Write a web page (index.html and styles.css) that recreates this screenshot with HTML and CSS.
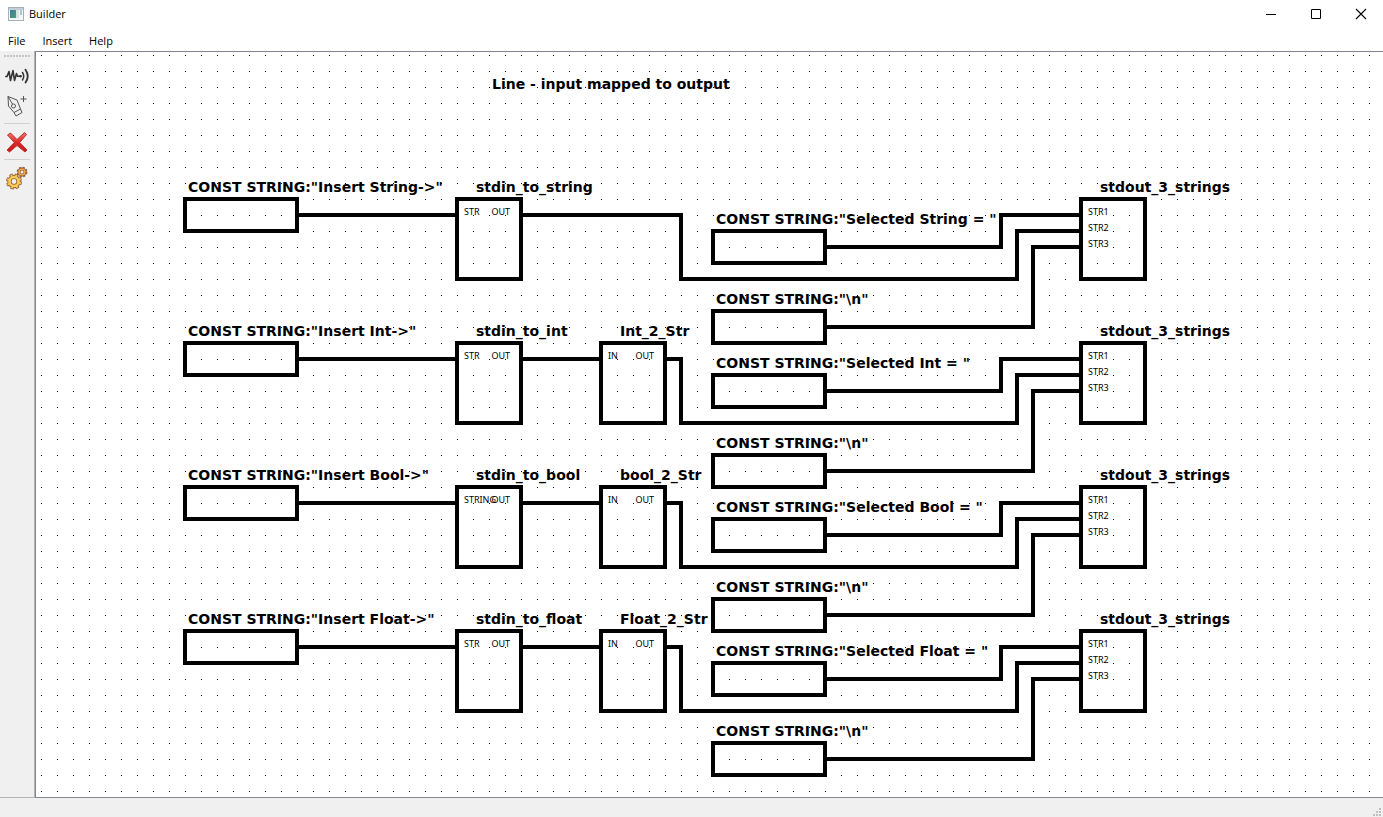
FILE: index.html
```html
<!DOCTYPE html>
<html lang="en">
<head>
<meta charset="utf-8">
<title>Builder</title>
<link rel="stylesheet" href="styles.css">
</head>
<body>
<header class="titlebar">
  <svg class="app-icon" width="16" height="14" viewBox="0 0 16 14" aria-hidden="true">
    <defs><linearGradient id="screen" x1="0" y1="0" x2="1" y2="1"><stop offset="0" stop-color="#3f78a8"/><stop offset="1" stop-color="#4aa36c"/></linearGradient></defs>
    <rect x=".5" y=".5" width="15" height="13" fill="#f4f6f8" stroke="#a3afba"/>
    <rect x="1" y="1" width="14" height="2" fill="#c3ced9"/>
    <rect x="2" y="3" width="6" height="8" fill="url(#screen)"/>
    <rect x="8" y="3" width="3" height="8" fill="#d5e6e2"/>
    <rect x="12" y="3" width="2" height="5" fill="#a9c9c9"/>
  </svg>
  <span class="title">Builder</span>
  <button class="win-btn" aria-label="Minimize"><svg width="12" height="12" viewBox="0 0 12 12"><path d="M1 6.500h10" stroke="#000"/></svg></button>
  <button class="win-btn" aria-label="Maximize"><svg width="12" height="12" viewBox="0 0 12 12"><path d="M1.500 1.500h9v9h-9z" fill="none" stroke="#000"/></svg></button>
  <button class="win-btn" aria-label="Close"><svg width="12" height="12" viewBox="0 0 12 12"><path d="M1 1l10 10M11 1L1 11" stroke="#000" stroke-width="1.100"/></svg></button>
</header>
<nav class="menubar">
  <button>File</button><button>Insert</button><button>Help</button>
</nav>
<div class="workspace">
  <aside class="toolbar">
    <div class="grip"></div>
    <button aria-label="Signal"><svg width="24" height="24" viewBox="0 0 24 24" fill="none" stroke="#333" stroke-linecap="round" stroke-linejoin="round"><path d="M.8 12.500H2L4 7.500L5.500 16.500L8 6.500L9.500 16.500L11.500 9.500L12.500 12.300H16" stroke-width="1.600"/><circle cx="15.500" cy="12.300" r="1.200" fill="#333" stroke="none"/><path d="M17.500 8.500Q20 12.300 17.500 16" stroke-width="1.500"/><path d="M20.500 5.800Q25 12.300 20.500 18.500" stroke-width="1.800"/></svg></button>
    <button aria-label="Pen"><svg width="24" height="24" viewBox="0 0 24 24" fill="none" stroke="#555"><path d="M3 2.500L3.500 12L9 18.500L15.500 15L12 6zM3 2.500L7.500 10M9 18.500L11 22L17 18.500L15.500 15"/><circle cx="8.500" cy="12" r="2"/><path d="M18.500 2v6M15.500 5h6"/></svg></button>
    <hr>
    <button aria-label="Delete"><svg width="24" height="24" viewBox="0 0 24 24"><defs><linearGradient id="red" x1="0" y1="0" x2="0" y2="1"><stop offset="0" stop-color="#f07570"/><stop offset=".5" stop-color="#dd2927"/><stop offset="1" stop-color="#c31818"/></linearGradient></defs><path d="M2.500 5L5.500 3L12 9.500L19.500 2.500L21.500 4.500L14.700 12.500L22 20L20 22L12 15.500L4.500 22L2 20L9.300 12.500z" fill="url(#red)" stroke="#bd3030" stroke-linejoin="round"/></svg></button>
    <hr>
    <button aria-label="Settings"><svg width="24" height="24" viewBox="0 0 24 24" fill="none"><circle cx="9" cy="15.500" r="6.200" stroke="#94653c" stroke-width="3.600" stroke-dasharray="3 1.870"/><circle cx="9" cy="15.500" r="4.600" stroke="#94653c" stroke-width="4.400"/><circle cx="9" cy="15.500" r="5.900" stroke="#ffc94f" stroke-width="2.600" stroke-dasharray="1.600 3.034" stroke-dashoffset="-.7"/><circle cx="9" cy="15.500" r="4.500" stroke="#ffcb55" stroke-width="2.600"/><circle cx="17" cy="6" r="4.200" stroke="#8d5b3c" stroke-width="2.400" stroke-dasharray="2 1.300"/><circle cx="17" cy="6" r="3" stroke="#95603c" stroke-width="3"/><circle cx="17" cy="6" r="2.900" stroke="#f3ac43" stroke-width="1.400"/></svg></button>
  </aside>
  <main class="canvas">
    <svg class="grid" aria-hidden="true"><defs><pattern id="dots" width="16" height="16" patternUnits="userSpaceOnUse"><rect x="5" y="3" width="1" height="1" fill="#000"/></pattern></defs><rect width="100%" height="100%" fill="url(#dots)"/></svg>
    <h1 class="heading">Line - input mapped to output</h1>

    <section class="line">
      <svg class="wires" aria-hidden="true"><path d="M262 38H420M486 38H645V102H981V54H1044M790 70H965V38H1044M790 150H997V70H1044"/></svg>
      <div class="node const prompt"><div class="name">CONST STRING:"Insert String-&gt;"</div><div class="box"></div></div>
      <div class="node reader"><div class="name">stdin_to_string</div><div class="box"><span>STR</span><span class="out">OUT</span></div></div>
      <div class="node const prefix"><div class="name">CONST STRING:"Selected String = "</div><div class="box"></div></div>
      <div class="node const newline"><div class="name">CONST STRING:"\n"</div><div class="box"></div></div>
      <div class="node sink"><div class="name">stdout_3_strings</div><div class="box"><span>STR1</span><span>STR2</span><span>STR3</span></div></div>
    </section>

    <section class="line">
      <svg class="wires" aria-hidden="true"><path d="M262 38H420M486 38H564M630 38H645V102H981V54H1044M790 70H965V38H1044M790 150H997V70H1044"/></svg>
      <div class="node const prompt"><div class="name">CONST STRING:"Insert Int-&gt;"</div><div class="box"></div></div>
      <div class="node reader"><div class="name">stdin_to_int</div><div class="box"><span>STR</span><span class="out">OUT</span></div></div>
      <div class="node convert"><div class="name">Int_2_Str</div><div class="box"><span>IN</span><span class="out">OUT</span></div></div>
      <div class="node const prefix"><div class="name">CONST STRING:"Selected Int = "</div><div class="box"></div></div>
      <div class="node const newline"><div class="name">CONST STRING:"\n"</div><div class="box"></div></div>
      <div class="node sink"><div class="name">stdout_3_strings</div><div class="box"><span>STR1</span><span>STR2</span><span>STR3</span></div></div>
    </section>

    <section class="line">
      <svg class="wires" aria-hidden="true"><path d="M262 38H420M486 38H564M630 38H645V102H981V54H1044M790 70H965V38H1044M790 150H997V70H1044"/></svg>
      <div class="node const prompt"><div class="name">CONST STRING:"Insert Bool-&gt;"</div><div class="box"></div></div>
      <div class="node reader"><div class="name">stdin_to_bool</div><div class="box"><span>STRING</span><span class="out">OUT</span></div></div>
      <div class="node convert"><div class="name">bool_2_Str</div><div class="box"><span>IN</span><span class="out">OUT</span></div></div>
      <div class="node const prefix"><div class="name">CONST STRING:"Selected Bool = "</div><div class="box"></div></div>
      <div class="node const newline"><div class="name">CONST STRING:"\n"</div><div class="box"></div></div>
      <div class="node sink"><div class="name">stdout_3_strings</div><div class="box"><span>STR1</span><span>STR2</span><span>STR3</span></div></div>
    </section>

    <section class="line">
      <svg class="wires" aria-hidden="true"><path d="M262 38H420M486 38H564M630 38H645V102H981V54H1044M790 70H965V38H1044M790 150H997V70H1044"/></svg>
      <div class="node const prompt"><div class="name">CONST STRING:"Insert Float-&gt;"</div><div class="box"></div></div>
      <div class="node reader"><div class="name">stdin_to_float</div><div class="box"><span>STR</span><span class="out">OUT</span></div></div>
      <div class="node convert"><div class="name">Float_2_Str</div><div class="box"><span>IN</span><span class="out">OUT</span></div></div>
      <div class="node const prefix"><div class="name">CONST STRING:"Selected Float = "</div><div class="box"></div></div>
      <div class="node const newline"><div class="name">CONST STRING:"\n"</div><div class="box"></div></div>
      <div class="node sink"><div class="name">stdout_3_strings</div><div class="box"><span>STR1</span><span>STR2</span><span>STR3</span></div></div>
    </section>
  </main>
</div>
<footer class="statusbar">
  <svg width="8" height="8" viewBox="0 0 8 8" fill="#bfbfbf" aria-hidden="true"><path d="M6 0h2v2h-2zM6 3h2v2h-2zM6 6h2v2h-2zM3 3h2v2h-2zM3 6h2v2h-2zM0 6h2v2h-2z"/></svg>
</footer>
</body>
</html>
```
FILE: styles.css
```css
* { box-sizing: border-box; }

body {
  margin: 0;
  height: 100vh;
  display: flex;
  flex-direction: column;
  overflow: hidden;
  background: #fff;
  color: #000;
  font: 11px/16px "Open Sans", "Noto Sans", sans-serif;
}

button {
  border: 0;
  padding: 0;
  background: none;
  color: inherit;
  font: inherit;
}

button svg { display: block; }

/* Window chrome */
.titlebar {
  display: flex;
  align-items: center;
  height: 28px;
  flex: none;
  padding-left: 8px;
}

.title { margin: 0 auto 0 5px; }

.win-btn {
  display: grid;
  place-items: center;
  width: 45px;
  height: 28px;
}

.menubar {
  display: flex;
  align-items: center;
  gap: 17px;
  flex: none;
  height: 23px;
  padding: 3px 8px 0;
}

.workspace {
  display: flex;
  flex: 1;
  min-height: 0;
}

/* Tool strip */
.toolbar {
  display: flex;
  flex-direction: column;
  align-items: center;
  width: 35px;
  flex: none;
  padding: 4px 0 0;
  background: #f0f0f0;
  border-right: 1px solid #b4b4b4;
  border-bottom: 1px solid #b4b4b4;
}

.grip {
  width: 26px;
  height: 2px;
  margin-bottom: 4px;
  background: repeating-linear-gradient(90deg, #c4c4c4 0 2px, transparent 2px 3px);
}

.toolbar button {
  display: grid;
  place-items: center;
  width: 30px;
  height: 30px;
}

.toolbar hr {
  width: 26px;
  margin: 2px 0 3px;
  border: 0;
  border-top: 1px solid #d0d0d0;
}

/* Diagram */
.canvas {
  position: relative;
  flex: 1;
  min-width: 0;
  padding-top: 125px;
  overflow: hidden;
  border: solid #828790;
  border-width: 1px 0 1px 1px;
  font: 9px/16px "Noto Sans", sans-serif;
}

.grid {
  position: absolute;
  inset: 0;
  width: 100%;
  height: 100%;
}

.heading,
.name {
  margin: 0;
  font: bold 14px/20px "DejaVu Sans", sans-serif;
  white-space: nowrap;
}

.heading {
  position: absolute;
  left: 456px;
  top: 22px;
}

.line {
  position: relative;
  height: 144px;
}

.wires {
  position: absolute;
  inset: 0;
  width: 100%;
  height: 100%;
  overflow: visible;
  fill: none;
  stroke: #000;
  stroke-width: 4;
}

.node {
  position: absolute;
  top: 0;
  width: 68px;
}

.name { padding-left: 21px; }

.box {
  position: relative;
  height: 84px;
  padding: 3px 5px;
  border: 4px solid #000;
}

.box span { display: block; }

.box .out {
  position: absolute;
  top: 3px;
  right: 9px;
}

.const { width: 116px; }
.const .name { padding-left: 5px; }
.const .box { height: 36px; }

.prompt { left: 147px; }
.reader { left: 419px; }
.convert { left: 563px; }
.prefix { left: 675px; top: 32px; }
.newline { left: 675px; top: 112px; }
.sink { left: 1043px; }

.statusbar {
  display: flex;
  justify-content: flex-end;
  align-items: flex-end;
  flex: none;
  height: 19px;
  padding: 0 2px 1px;
  background: #f0f0f0;
}
```
